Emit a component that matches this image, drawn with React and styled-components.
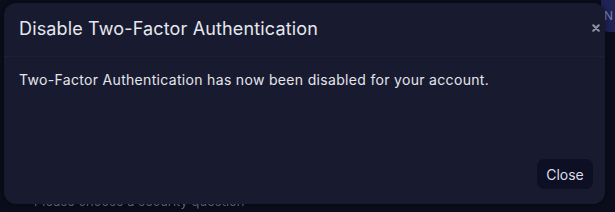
import React from 'react';
import styled, { createGlobalStyle } from 'styled-components';

const GlobalStyle = createGlobalStyle`
  html, body {
    margin: 0;
    padding: 0;
    background: #0b0d1b;
    font-family: Inter, 'Noto Sans', sans-serif;
    overflow: hidden;
  }
`;

const Page = styled.div`
  position: relative;
  width: 615px;
  height: 212px;
  overflow: hidden;
  background: #0b0d1b;
`;

const BackdropTab = styled.div`
  position: absolute;
  top: -6px;
  right: -20px;
  width: 34px;
  height: 38px;
  border-radius: 8px;
  background: #1f2357;
  color: #7c7fae;
  font-size: 12px;
  padding: 14px 0 0 3px;
  box-sizing: border-box;
`;

const BackdropText = styled.div`
  position: absolute;
  left: 34px;
  top: 193px;
  color: #6e7088;
  font-size: 13px;
  line-height: 16px;
  filter: blur(0.5px);
`;

const Modal = styled.div`
  position: absolute;
  left: 4px;
  top: 3px;
  width: 601px;
  height: 201px;
  box-sizing: border-box;
  background: #181b2f;
  border-radius: 12px;
  box-shadow: 0 0 6px rgba(0, 0, 0, 0.5);
  display: flex;
  flex-direction: column;
`;

const Header = styled.div`
  display: flex;
  justify-content: space-between;
  align-items: flex-start;
  height: 54px;
  box-sizing: border-box;
  padding: 14px 5px 0 15px;
  border-bottom: 1px solid #1d2034;
`;

const Title = styled.h2`
  margin: 0;
  font-size: 18px;
  font-weight: 400;
  color: #e6e7ee;
  line-height: 24px;
  letter-spacing: 0.15px;
`;

const CloseIcon = styled.button`
  border: none;
  background: none;
  padding: 0;
  margin-top: 7px;
  color: #8d8fa2;
  cursor: pointer;
  width: 8px;
  height: 8px;
  display: flex;
`;

const Body = styled.div`
  flex: 1;
  padding: 14px 15px 0;
  font-size: 14px;
  line-height: 18px;
  letter-spacing: 0.32px;
  color: #e4e5ec;
`;

const Footer = styled.div`
  display: flex;
  justify-content: flex-end;
  padding: 0 12px 15px;
`;

const Button = styled.button`
  background: #0d0f25;
  color: #dcdde6;
  border: none;
  border-radius: 7px;
  width: 56px;
  height: 30px;
  font-family: inherit;
  font-size: 14px;
  cursor: pointer;
`;

export default function App() {
  return (
    <Page>
      <GlobalStyle />
      <BackdropTab>N</BackdropTab>
      <BackdropText>Please choose a security question</BackdropText>
      <Modal>
        <Header>
          <Title>Disable Two-Factor Authentication</Title>
          <CloseIcon aria-label="close">
            <svg width="8" height="8" viewBox="0 0 8 8">
              <path d="M1.3 1.3 L6.7 6.7 M6.7 1.3 L1.3 6.7" stroke="currentColor" strokeWidth="2.2" strokeLinecap="round" />
            </svg>
          </CloseIcon>
        </Header>
        <Body>Two-Factor Authentication has now been disabled for your account.</Body>
        <Footer>
          <Button>Close</Button>
        </Footer>
      </Modal>
    </Page>
  );
}
